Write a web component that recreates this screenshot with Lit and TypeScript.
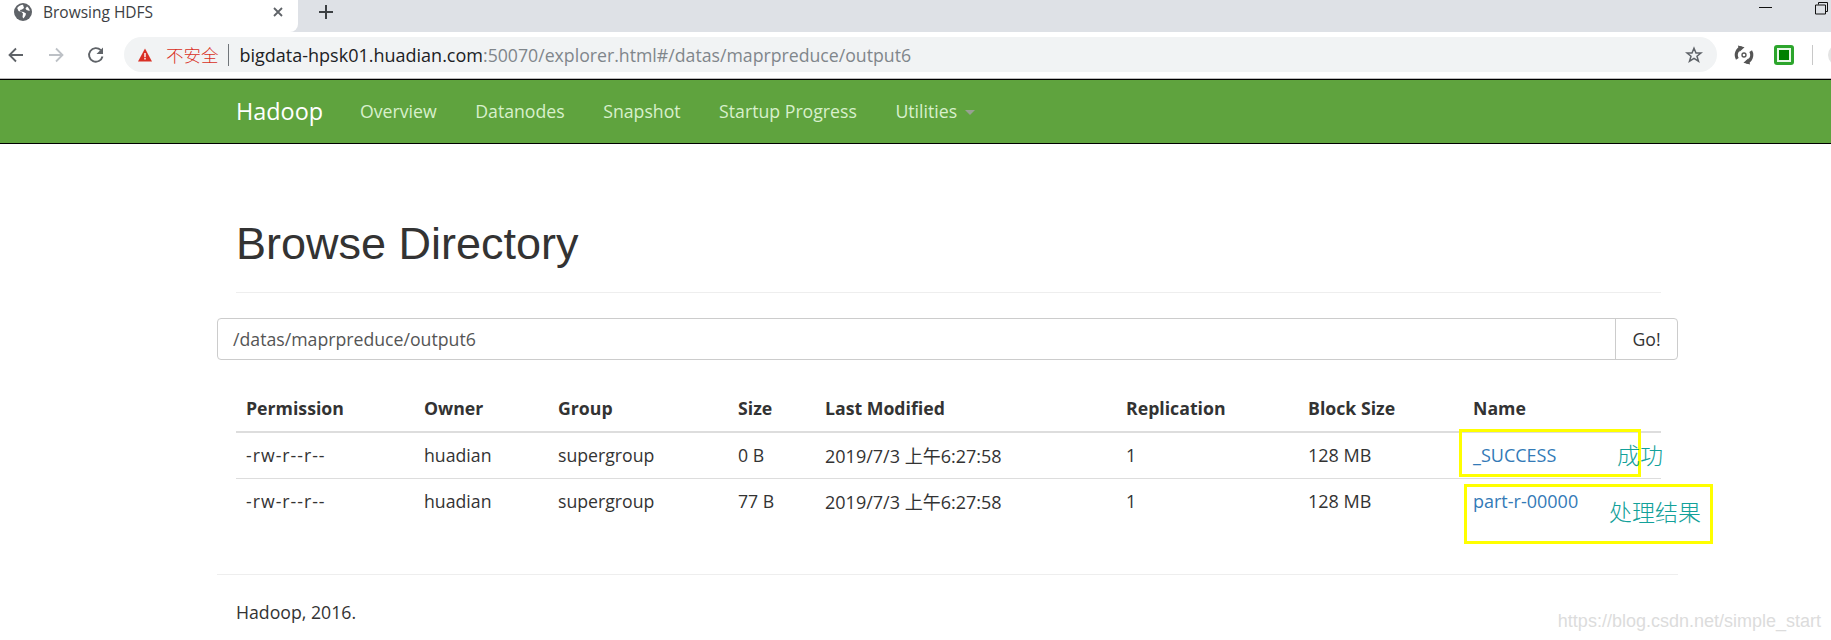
import { LitElement, html, css, svg } from "lit";
import { customElement } from "lit/decorators.js";

const COLS = [
  { label: "Permission", w: 178 },
  { label: "Owner", w: 134 },
  { label: "Group", w: 180 },
  { label: "Size", w: 87 },
  { label: "Last Modified", w: 301 },
  { label: "Replication", w: 182 },
  { label: "Block Size", w: 165 },
  { label: "Name", w: 198 },
];
const ROWS = [
  ["-rw-r--r--", "huadian", "supergroup", "0 B", "2019/7/3 上午6:27:58", "1", "128 MB", "_SUCCESS"],
  ["-rw-r--r--", "huadian", "supergroup", "77 B", "2019/7/3 上午6:27:58", "1", "128 MB", "part-r-00000"],
];

@customElement("app-root")
export class AppRoot extends LitElement {
  static styles = css`
    :host { display: block; width: 1831px; height: 640px; overflow: hidden; position: relative; background: #fff;
      font-family: "Open Sans", "Noto Sans CJK SC", sans-serif; color: #333; }
    .tabs { height: 32px; background: #dee1e6; display: flex; align-items: stretch; }
    .tab { width: 298px; background: #fff; display: flex; align-items: center; padding: 0 15px 9px 14px; box-sizing: border-box; border-bottom-right-radius: 8px; font-size: 15.5px; color: #3c4043; gap: 11px; }
    .tab span { flex: 1; }
    .newtab { margin: 0 0 9px 21px; display: flex; align-items: center; }
    .spacer { flex: 1; }
    .win { display: flex; align-items: flex-start; gap: 43px; padding: 2px 3px 0 0; }
    .toolbar { height: 47px; background: #fff; display: flex; align-items: center; box-sizing: border-box; padding: 5px 0 7px 0; }
    .nav { display: flex; flex: none; align-items: center; gap: 22px; padding-left: 7px; width: 124px; box-sizing: border-box; }
    .omni { flex: none; width: 1593px; height: 35px; border-radius: 18px; background: #f1f3f4; display: flex; align-items: center; padding: 0 14px 0 14px; box-sizing: border-box; font-size: 18px; }
    .warn { color: #d93025; font-size: 17.5px; font-weight: 300; margin-left: 14px; }
    .sep { width: 1px; height: 22px; background: #70757a; margin: 0 11px 0 9px; }
    .host { color: #202124; }
    .rest { color: #80868b; font-size: 17.7px; }
    .omni .grow { flex: 1; }
    .ext { display: flex; flex: none; align-items: center; margin-left: 17px; gap: 20px; }
    .vsep { width: 1px; height: 20px; background: #c8c8c8; margin-left: -2px; }
    .avatar { width: 12px; height: 22px; background: #e4e4e4; border-radius: 11px 0 0 11px; margin-left: -5px; }
    .navbar { height: 65px; box-sizing: border-box; background: #5fa33e; border-top: 1px solid #000; border-bottom: 1px solid #000; box-shadow: 0 -1px 0 #bbb; display: flex; align-items: center; padding: 0 0 2px 236px; }
    .brand { color: #fff; font-size: 23.4px; margin-right: 37px; }
    .link { color: #d8f0cc; font-size: 17.7px; margin-right: 38.5px; }
    .caret { display: inline-block; width: 0; height: 0; border-left: 5px solid transparent; border-right: 5px solid transparent; border-top: 5px solid #98a092; margin-left: 8px; vertical-align: middle; }
    .container { padding: 0 153px 0 217px; }
    .header { margin: 0 17px 0 19px; padding: 73px 0 22px; border-bottom: 1px solid #eee; }
    h1 { margin: 0; font-family: "Liberation Sans", sans-serif; font-size: 45px; font-weight: 400; line-height: 53px; color: #333; }
    .input-group { display: flex; height: 42px; margin-top: 25px; box-sizing: border-box; border: 1px solid #ccc; border-radius: 4px; font-size: 17.7px; color: #555; }
    .input-group .path { flex: 1; padding: 0 15px; display: flex; align-items: center; }
    .input-group .go { width: 61px; border-left: 1px solid #ccc; display: flex; align-items: center; justify-content: center; color: #333; }
    table { border-collapse: collapse; table-layout: fixed; width: 1425px; margin: 24px 0 0 19px; font-size: 17.7px; }
    th { text-align: left; font-weight: 700; padding: 0 10px; height: 47px; border-bottom: 2px solid #ddd; }
    td { padding: 0 10px 1px; height: 44px; box-sizing: content-box; vertical-align: middle; }
    tr.first td { border-bottom: 1px solid #ddd; }
    tr.last td { padding-bottom: 2px; }
    td.c0 { letter-spacing: 1px; }
    td.c4, td.c6, td.c7 { font-size: 18px; }
    a { color: #337ab7; text-decoration: none; }
    hr { border: 0; border-top: 1px solid #eee; margin: 49px 0 0; }
    .foot { margin: 23px 19px 0; font-size: 17.7px; line-height: 28px; }
    .box { position: absolute; border: 3px solid #ff0; box-sizing: border-box; }
    .note { position: absolute; color: #12a19a; font-size: 23px; font-family: "Noto Sans CJK SC", sans-serif; font-weight: 300; line-height: 24px; white-space: nowrap; }
    .mark { position: absolute; right: 10px; bottom: 9px; color: #dcdcdc; font-family: "Liberation Sans", sans-serif; font-size: 18px; line-height: 20px; }
  `;

  private icon(d: any, w = 20, h = 20, vb = "0 0 20 20") {
    return html`<svg width=${w} height=${h} viewBox=${vb}>${d}</svg>`;
  }

  render() {
    return html`
      <div class="tabs">
        <div class="tab">
          ${this.icon(svg`<circle cx="9" cy="9" r="9" fill="#5f6368"/><path d="M9 1.800C6.500 2 4.500 3 3.200 5l1.300 3 3 1 1.500 1.500-.5 3.500 1 1.500 2-3 .5-2-2.500-1.500-3-.5-.5-1.500 2-.5 2-1.500z" fill="#fff"/><path d="M13 3.500l-1.500 2 1 1.500 3.200 1C15.500 6 14.500 4.500 13 3.500z" fill="#fff"/>`, 18, 18, "0 0 18 18")}
          <span>Browsing HDFS</span>
          ${this.icon(svg`<path d="M1 1l8 8M9 1l-8 8" stroke="#5f6368" stroke-width="1.800" fill="none"/>`, 10, 10, "0 0 10 10")}
        </div>
        <div class="newtab">
          ${this.icon(svg`<path d="M7 0v14M0 7h14" stroke="#3c4043" stroke-width="2" fill="none"/>`, 14, 14, "0 0 14 14")}
        </div>
        <div class="spacer"></div>
        <div class="win">
          ${this.icon(svg`<path d="M0 5.500h13" stroke="#111" stroke-width="1"/>`, 13, 12, "0 0 13 12")}
          ${this.icon(svg`<path d="M3.500 2.500V.5h9v9h-2M.5 3h10v9H.5z" stroke="#111" stroke-width="1" fill="none"/>`, 13, 13, "0 0 13 13")}
        </div>
      </div>
      <div class="toolbar">
        <div class="nav">
          ${this.icon(svg`<path d="M16 9H2.500M9 2.500 2.500 9 9 15.500" stroke="#5f6368" stroke-width="1.800" fill="none"/>`, 18, 18, "0 0 18 18")}
          ${this.icon(svg`<path d="M2 9h13.500M9 2.500 15.500 9 9 15.500" stroke="#bdc1c6" stroke-width="1.800" fill="none"/>`, 18, 18, "0 0 18 18")}
          ${this.icon(svg`<path d="M15.500 10.500A6.800 6.800 0 1 1 13.800 4.200" stroke="#5f6368" stroke-width="1.900" fill="none"/><path d="M16 1.500v6.500H9.500z" fill="#5f6368"/>`, 18, 18, "0 0 18 18")}
        </div>
        <div class="omni">
          ${this.icon(svg`<path d="M7 .5 14 13.500H0z" fill="#d93025"/><path d="M6.300 5h1.400v4.200H6.300zM6.300 10h1.400v1.400H6.300z" fill="#fff"/>`, 14, 14, "0 0 14 14")}
          <span class="warn">不安全</span><span class="sep"></span>
          <span class="host">bigdata-hpsk01.huadian.com</span><span class="rest">:50070/explorer.html#/datas/maprpreduce/output6</span>
          <span class="grow"></span>
          ${this.icon(svg`<path d="M9 2.200 11 7h5l-4 3.200 1.500 5L9 12.300l-4.500 2.900 1.500-5L2 7h5z" stroke="#5f6368" stroke-width="1.500" fill="none"/>`, 18, 18, "0 0 18 18")}
        </div>
        <div class="ext">
          ${this.icon(svg`<path d="M3 12.500A7 7 0 0 1 7 2.300" stroke="#555" stroke-width="2.800" fill="none"/><path d="M15 5.500A7 7 0 0 1 11 15.700" stroke="#555" stroke-width="2.800" fill="none"/><path d="M3.500 .5l6 1.500-4.500 4zM14.500 17.500l-6-1.500 4.500-4z" fill="#555"/><circle cx="9" cy="9" r="1.800" stroke="#555" stroke-width="1.200" fill="none"/>`, 20, 20, "0 0 18 18")}
          ${this.icon(svg`<rect width="20" height="20" rx="3" fill="#2ca52c"/><rect x="3" y="3" width="14" height="14" fill="#e8f8e8"/><rect x="5" y="5" width="10" height="10" fill="#008000"/>`, 20, 20)}
          <span class="vsep"></span><span class="avatar"></span>
        </div>
      </div>
      <div class="navbar">
        <span class="brand">Hadoop</span>
        <span class="link">Overview</span>
        <span class="link">Datanodes</span>
        <span class="link">Snapshot</span>
        <span class="link">Startup Progress</span>
        <span class="link">Utilities<i class="caret"></i></span>
      </div>
      <div class="container">
        <div class="header"><h1>Browse Directory</h1></div>
        <div class="input-group">
          <div class="path">/datas/maprpreduce/output6</div>
          <div class="go">Go!</div>
        </div>
        <table>
          <colgroup>${COLS.map((c) => html`<col style="width:${c.w}px" />`)}</colgroup>
          <thead><tr>${COLS.map((c) => html`<th>${c.label}</th>`)}</tr></thead>
          <tbody>
            ${ROWS.map((r, i) => html`<tr class=${i === 0 ? "first" : "last"}>
              ${r.map((v, j) => html`<td class="c${j}">${j === 7 ? html`<a>${v}</a>` : v}</td>`)}
            </tr>`)}
          </tbody>
        </table>
        <hr />
        <div class="foot">Hadoop, 2016.</div>
      </div>
      <div class="box" style="left:1459px;top:429px;width:182px;height:48px"></div>
      <div class="box" style="left:1464px;top:484px;width:249px;height:60px"></div>
      <div class="note" style="left:1617px;top:442px">成功</div>
      <div class="note" style="left:1609px;top:499px">处理结果</div>
      <div class="mark">https://blog.csdn.net/simple_start</div>
    `;
  }
}
